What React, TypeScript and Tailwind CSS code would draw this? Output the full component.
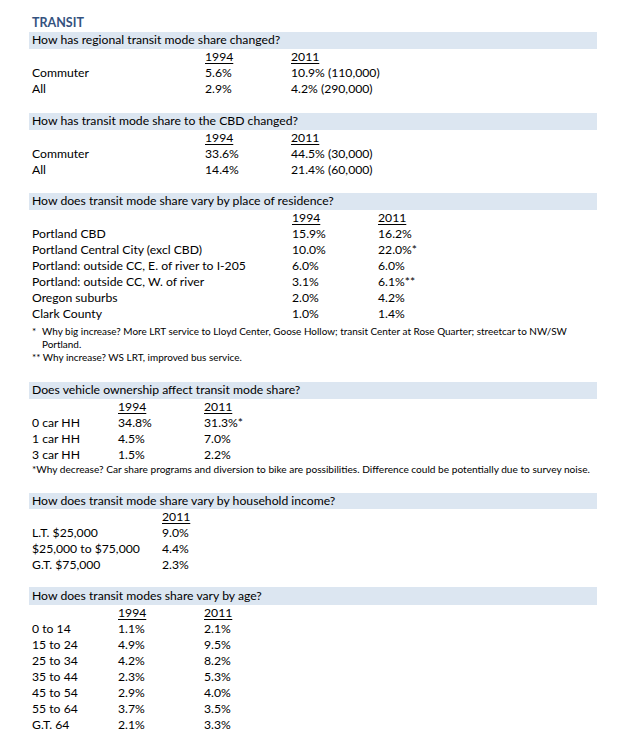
import React from "react";

const F = { fontFamily: "Lato, 'Liberation Sans', sans-serif" };

function Bar({ children, cls = "h-[17px]" }: { children: React.ReactNode; cls?: string }) {
  return (
    <div className={`${cls} w-[568px] bg-[#dce6f1] pl-[3px] flex items-center text-[12.2px] leading-none text-black`}>
      {children}
    </div>
  );
}

function Row({ cols, cells, year = false }: { cols: string[]; cells: string[]; year?: boolean }) {
  return (
    <div className="h-[16px] flex items-center pl-[3px] text-[12.2px] leading-none text-black">
      {cells.map((c, i) => (
        <div key={i} className={cols[i] ?? ""}>
          <span className={year && c ? "underline underline-offset-2 decoration-1" : ""}>{c}</span>
        </div>
      ))}
    </div>
  );
}

export default function App() {
  const s1 = ["w-[173px]", "w-[86px]", ""];
  const s3 = ["w-[260px]", "w-[86px]", ""];
  const s4 = ["w-[86px]", "w-[86px]", ""];
  const s5 = ["w-[130px]", ""];
  return (
    <div style={F} className="w-[626px] h-[749px] bg-white pl-[29px] pt-[15px]">
      <div className="h-[17px] pl-[3px] flex items-center text-[12.5px] font-bold text-[#34527f] leading-none">TRANSIT</div>

      <Bar>How has regional transit mode share changed?</Bar>
      <Row cols={s1} cells={["", "1994", "2011"]} year />
      <Row cols={s1} cells={["Commuter", "5.6%", "10.9% (110,000)"]} />
      <Row cols={s1} cells={["All", "2.9%", "4.2% (290,000)"]} />

      <div className="h-[16px]" />
      <Bar>How has transit mode share to the CBD changed?</Bar>
      <Row cols={s1} cells={["", "1994", "2011"]} year />
      <Row cols={s1} cells={["Commuter", "33.6%", "44.5% (30,000)"]} />
      <Row cols={s1} cells={["All", "14.4%", "21.4% (60,000)"]} />

      <div className="h-[15px]" />
      <Bar>How does transit mode share vary by place of residence?</Bar>
      <Row cols={s3} cells={["", "1994", "2011"]} year />
      <Row cols={s3} cells={["Portland CBD", "15.9%", "16.2%"]} />
      <Row cols={s3} cells={["Portland Central City (excl CBD)", "10.0%", "22.0%*"]} />
      <Row cols={s3} cells={["Portland: outside CC, E. of river to I-205", "6.0%", "6.0%"]} />
      <Row cols={s3} cells={["Portland: outside CC, W. of river", "3.1%", "6.1%**"]} />
      <Row cols={s3} cells={["Oregon suburbs", "2.0%", "4.2%"]} />
      <Row cols={s3} cells={["Clark County", "1.0%", "1.4%"]} />
      <div className="pt-[3px] pl-[3px] text-[9.95px] leading-[13px] text-black">
        <div className="flex">
          <span className="w-[10px]">*</span>
          <span>
            Why big increase? More LRT service to Lloyd Center, Goose Hollow; transit Center at Rose Quarter; streetcar to NW/SW
            <br />
            Portland.
          </span>
        </div>
        <div>** Why increase? WS LRT, improved bus service.</div>
      </div>

      <div className="h-[18px]" />
      <Bar>Does vehicle ownership affect transit mode share?</Bar>
      <Row cols={s4} cells={["", "1994", "2011"]} year />
      <Row cols={s4} cells={["0 car HH", "34.8%", "31.3%*"]} />
      <Row cols={s4} cells={["1 car HH", "4.5%", "7.0%"]} />
      <Row cols={s4} cells={["3 car HH", "1.5%", "2.2%"]} />
      <div className="pl-[3px] h-[13px] text-[10.15px] leading-[13px] text-black whitespace-nowrap">
        *Why decrease? Car share programs and diversion to bike are possibilities. Difference could be potentially due to survey noise.
      </div>

      <div className="h-[17px]" />
      <Bar cls="h-[16px]">How does transit mode share vary by household income?</Bar>
      <Row cols={s5} cells={["", "2011"]} year />
      <Row cols={s5} cells={["L.T. $25,000", "9.0%"]} />
      <Row cols={s5} cells={["$25,000 to $75,000", "4.4%"]} />
      <Row cols={s5} cells={["G.T. $75,000", "2.3%"]} />

      <div className="h-[14px]" />
      <Bar cls="h-[18px]">How does transit modes share vary by age?</Bar>
      <Row cols={s4} cells={["", "1994", "2011"]} year />
      <Row cols={s4} cells={["0 to 14", "1.1%", "2.1%"]} />
      <Row cols={s4} cells={["15 to 24", "4.9%", "9.5%"]} />
      <Row cols={s4} cells={["25 to 34", "4.2%", "8.2%"]} />
      <Row cols={s4} cells={["35 to 44", "2.3%", "5.3%"]} />
      <Row cols={s4} cells={["45 to 54", "2.9%", "4.0%"]} />
      <Row cols={s4} cells={["55 to 64", "3.7%", "3.5%"]} />
      <Row cols={s4} cells={["G.T. 64", "2.1%", "3.3%"]} />
    </div>
  );
}
